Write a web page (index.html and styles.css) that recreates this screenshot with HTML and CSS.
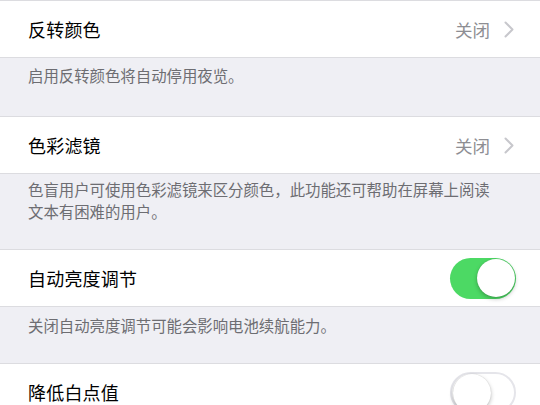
FILE: index.html
```html
<!DOCTYPE html>
<html lang="zh-CN">
<head>
<meta charset="utf-8">
<link rel="stylesheet" href="styles.css">
</head>
<body>
<div class="page">
  <div class="row first">
    <span class="title">反转颜色</span>
    <span class="detail">关闭<svg class="chev" viewBox="0 0 10 17" width="10" height="17"><path d="M1.5 1.5 L8.5 8.5 L1.5 15.5" fill="none" stroke="#c7c7cc" stroke-width="2" stroke-linecap="round" stroke-linejoin="round"/></svg></span>
  </div>
  <div class="footer f1">启用反转颜色将自动停用夜览。</div>

  <div class="row">
    <span class="title">色彩滤镜</span>
    <span class="detail">关闭<svg class="chev" viewBox="0 0 10 17" width="10" height="17"><path d="M1.5 1.5 L8.5 8.5 L1.5 15.5" fill="none" stroke="#c7c7cc" stroke-width="2" stroke-linecap="round" stroke-linejoin="round"/></svg></span>
  </div>
  <div class="footer f2">色盲用户可使用色彩滤镜来区分颜色，此功能还可帮助在屏幕上阅读文本有困难的用户。</div>

  <div class="row">
    <span class="title">自动亮度调节</span>
    <span class="toggle on"><span class="knob"></span></span>
  </div>
  <div class="footer f3">关闭自动亮度调节可能会影响电池续航能力。</div>

  <div class="row">
    <span class="title">降低白点值</span>
    <span class="toggle off"><span class="knob"></span></span>
  </div>
</div>
</body>
</html>
```
FILE: styles.css
```css
html, body {
  margin: 0;
  padding: 0;
}
body {
  background: #efeff4;
  font-family: "Noto Sans CJK SC", "Noto Sans", sans-serif;
  width: 540px;
  height: 405px;
  overflow: hidden;
}
.page {
  display: flex;
  flex-direction: column;
}
.row {
  background: #fff;
  height: 56px;
  border-top: 1px solid #dcdce0;
  border-bottom: 1px solid #dcdce0;
  display: flex;
  align-items: center;
  justify-content: space-between;
  padding: 0 24px 0 28px;
  box-sizing: content-box;
}
.title {
  font-size: 18px;
  color: #000;
  letter-spacing: 0.2px;
}
.detail {
  display: flex;
  align-items: center;
  font-size: 17.5px;
  color: #8e8e93;
  gap: 14px;
  padding-right: 2px;
}
.chev {
  display: block;
}
.footer {
  color: #6d6d72;
  font-size: 15.4px;
  line-height: 22px;
  padding: 6px 40px 0 28px;
  box-sizing: border-box;
}
.f1 { height: 58px; }
.f2 { height: 75px; padding-top: 4px; }
.f3 { height: 56px; padding-top: 7px; }
.toggle {
  width: 66px;
  height: 41px;
  border-radius: 21px;
  position: relative;
  box-sizing: border-box;
}
.toggle.on {
  background: #4cd964;
}
.toggle.off {
  background: #fff;
  border: 2px solid #e5e5ea;
}
.knob {
  position: absolute;
  width: 38px;
  height: 38px;
  border-radius: 50%;
  background: #fff;
  box-shadow: 0 2px 4px rgba(0,0,0,0.25), 0 0 1px rgba(0,0,0,0.2);
}
.on .knob {
  top: 1.5px;
  right: 1.5px;
}
.off .knob {
  top: 0.5px;
  left: 0.5px;
}
```
